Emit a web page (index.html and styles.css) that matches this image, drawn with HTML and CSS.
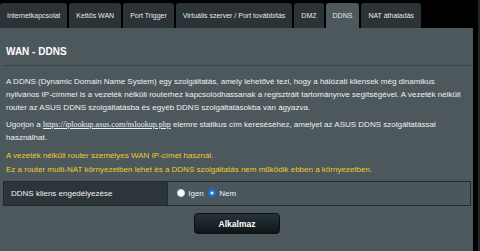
FILE: index.html
```html
<!DOCTYPE html>
<html lang="hu">
<head>
    <meta charset="UTF-8" />
    <meta name="viewport" content="width=device-width, initial-scale=1.0" />
    <link rel="stylesheet" href="styles.css">
</head>
<body>
    <div class="page">
        <nav class="tabs">
            <div class="tab">Internetkapcsolat</div>
            <div class="tab">Kettős WAN</div>
            <div class="tab">Port Trigger</div>
            <div class="tab">Virtuális szerver / Port továbbítás</div>
            <div class="tab">DMZ</div>
            <div class="tab tab--active">DDNS</div>
            <div class="tab">NAT áthaladás</div>
        </nav>
        <main class="panel">
            <h2 class="title">WAN - DDNS</h2>
            <div class="desc">
                <p>A DDNS (Dynamic Domain Name System) egy szolgáltatás, amely lehetővé tezi, hogy a hálózati kliensek még dinamikus<br>nyilvános IP-címmel is a vezeték nélküli routerhez kapcsolódhassanak a regisztrált tartománynve segítségével. A vezeték nélküli<br>router az ASUS DDNS szolgáltatásba és egyéb DDNS szolgáltatásokba van ágyazva.</p>
                <p>Ugorjon a <a href="#">https://iplookup.asus.com/nslookup.php</a> elemre statikus cím kereséséhez, amelyet az ASUS DDNS szolgáltatással<br>használhat.</p>
                <p class="hint">A vezeték nélküli router személyes WAN IP-címet használ.<br>Ez a router multi-NAT környezetben lehet és a DDNS szolgáltatás nem működik ebben a környezetben.</p>
            </div>
            <table class="form">
                <tr>
                    <th>DDNS kliens engedélyezése</th>
                    <td>
                        <label><input type="radio" name="ddns" value="1"> Igen</label>
                        <label><input type="radio" name="ddns" value="0" checked> Nem</label>
                    </td>
                </tr>
            </table>
            <div class="actions">
                <button>Alkalmaz</button>
            </div>
        </main>
    </div>
    <div class="edge"></div>
</body>
</html>
```

FILE: styles.css
```css
html, body {
    margin: 0;
    padding: 0;
    font-family: 'Liberation Sans', Arial, sans-serif;
}
* {
    box-sizing: border-box;
}
body {
    background-color: #000;
    display: flex;
    height: 100vh;
    overflow: hidden;
}
.page {
    width: 473px;
    display: flex;
    flex-direction: column;
}
.edge {
    width: 2px;
    margin-left: 5px;
    background-color: #1f2629;
}
.tabs {
    display: flex;
    gap: 2px;
    padding-top: 3px;
    height: 28px;
}
.tab {
    padding: 0 7px;
    line-height: 25px;
    font-size: 7px;
    color: #e6e8e8;
    background-color: #2b3337;
    border-radius: 3px 3px 0 0;
    white-space: nowrap;
}
.tab--active {
    background-color: #4e595d;
}
.panel {
    flex: 1;
    background-color: #4d585c;
    padding: 0 2px 0 3px;
}
.title {
    margin: 0;
    padding: 18px 3px 7px;
    font-size: 10px;
    line-height: 12px;
    color: #fff;
    border-bottom: 1px solid #3a4447;
}
.desc {
    padding: 0 3px;
    color: #eef0f0;
    font-size: 8px;
    line-height: 13px;
    white-space: nowrap;
}
.desc p {
    margin: 4px 0 0;
}
.desc p:first-child {
    margin-top: 9px;
}
.desc a {
    color: #eef0f0;
    font-family: 'Liberation Serif', 'Times New Roman', serif;
}
.desc .hint {
    margin-top: 5px;
    line-height: 14px;
    color: #eccb2c;
}
.form {
    margin-top: 4px;
    width: 468px;
    border-collapse: collapse;
    font-size: 8px;
    color: #f0f0f0;
}
.form th, .form td {
    height: 24px;
    border: 1px solid #222a2d;
    padding: 0 7px;
}
.form th {
    width: 164px;
    text-align: left;
    font-weight: normal;
    background-color: #2c363a;
}
.form td {
    background-color: #48585e;
    padding-left: 9px;
}
label {
    margin-right: 2px;
}
input[type="radio"] {
    -webkit-appearance: none;
    appearance: none;
    width: 8px;
    height: 8px;
    margin: 0 1px 0 0;
    vertical-align: -1px;
    border-radius: 50%;
    background-color: #fff;
    border: 1px solid #d8d8d8;
}
input[type="radio"]:checked {
    border: 1px solid #1b6fd6;
    background: radial-gradient(circle, #dbe9ff 0, #dbe9ff 1.2px, #1d72dc 1.8px);
}
.actions {
    display: flex;
    justify-content: center;
    margin-top: 7px;
}
button {
    width: 86px;
    height: 21px;
    border: 1px solid #0b0f11;
    border-radius: 4px;
    background: linear-gradient(#27343a, #0f1517);
    color: #fff;
    font-family: 'Liberation Sans', Arial, sans-serif;
    font-size: 8.5px;
    font-weight: bold;
}
```
